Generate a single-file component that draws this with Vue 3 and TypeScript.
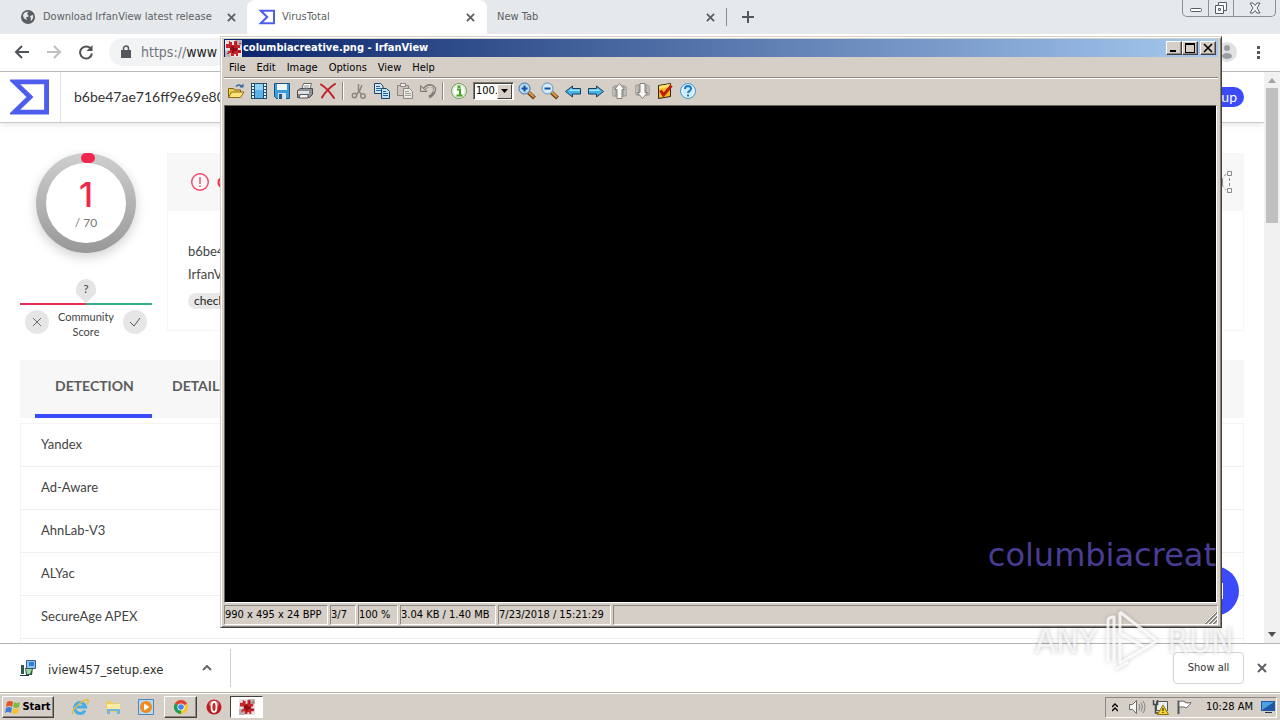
<script setup lang="ts">
import { ref } from 'vue'

interface Tool {
  id: string
  label: string
}

const hash = 'b6be47ae716ff9e69e80'
const engines: string[] = ['Yandex', 'Ad-Aware', 'AhnLab-V3', 'ALYac', 'SecureAge APEX', '']
const menus: string[] = ['File', 'Edit', 'Image', 'Options', 'View', 'Help']
const zoomLevel = ref('100.')

const toolsA: Tool[] = [
  { id: 'open', label: 'Open' },
  { id: 'film', label: 'Slideshow' },
  { id: 'save', label: 'Save' },
  { id: 'print', label: 'Print' },
  { id: 'delete', label: 'Delete' },
  { id: 'sep', label: '' },
  { id: 'cut', label: 'Cut' },
  { id: 'copy', label: 'Copy' },
  { id: 'paste', label: 'Paste' },
  { id: 'undo', label: 'Undo' },
  { id: 'sep', label: '' },
  { id: 'info', label: 'Information' },
]
const toolsB: Tool[] = [
  { id: 'zoomin', label: 'Zoom in' },
  { id: 'zoomout', label: 'Zoom out' },
  { id: 'prev', label: 'Previous file' },
  { id: 'next', label: 'Next file' },
  { id: 'pageup', label: 'Previous page' },
  { id: 'pagedown', label: 'Next page' },
  { id: 'settings', label: 'Settings' },
  { id: 'help', label: 'Help' },
]
</script>

<template>
  <div class="desktop">
    <svg class="defs" width="0" height="0" aria-hidden="true">
      <defs>
        <symbol id="i-splat" viewBox="0 0 17 17">
          <path d="M0 0H17V17H0Z" fill="#e9e1e2" />
          <path d="M10 0h7v5l-4 2zM0 11l5-1 1 7H0z" fill="#b9b3b5" />
          <path d="M1 4h3V2h3v3h2V1h3v4h3v3h-2v2h3v3h-3v3h-2v-2h-2v2H6v-3H3v-2h2V8H1z" fill="#c4242a" />
          <path d="M6 6h3v2h3v3H9v2H7v-3H5zM11 2h1v3h-1zM13 11h2v1h-2z" fill="#8d0f15" />
          <path d="M2 13h2v1H2zM14 3h2v1h-2zM4 1h1v1H4z" fill="#c4242a" />
        </symbol>
        <symbol id="i-open" viewBox="0 0 18 18">
          <path d="M1.500 15.500V6.500h5l1 1.500h6v2" fill="#f2cf4a" stroke="#7b6210" />
          <path d="M1.500 15.500L4.500 10h12.500l-3.500 5.500z" fill="#ffe27a" stroke="#8e6d10" />
          <path d="M9 4.500q3-3 5.500 0" fill="none" stroke="#2f62a8" stroke-width="1.500" />
          <path d="M12.500 5.500h4V1.500z" fill="#2f62a8" />
        </symbol>
        <symbol id="i-film" viewBox="0 0 18 18">
          <path d="M1 1h16v16H1z" fill="#24506f" />
          <path d="M5 2h8v14H5z" fill="#58b4e6" /><path d="M5 2h8v6H5z" fill="#8fd2f5" />
          <path d="M3 2v14M15 2v14" stroke="#e6f4fc" stroke-width="2" stroke-dasharray="2 1" />
        </symbol>
        <symbol id="i-save" viewBox="0 0 18 18">
          <path d="M1.500 1.500h15v15h-13l-2-2z" fill="#3b9bdc" stroke="#1b5584" />
          <path d="M4 2h10v6H4z" fill="#eef7fd" /><path d="M5 11h8v6H5z" fill="#d3e2ec" /><path d="M6 12h3v5H6z" fill="#24587f" />
        </symbol>
        <symbol id="i-print" viewBox="0 0 18 18">
          <path d="M5.500 8l2-6.500h8L13.500 8z" fill="#fff" stroke="#666" />
          <path d="M1.500 8.500l3-2h12v6l-3 3h-12z" fill="#8f9294" stroke="#4a4a4a" />
          <path d="M2 9h11v3H2z" fill="#dfe1e2" /><path d="M4 12.500h8v3.500H3z" fill="#f6f6f6" stroke="#555" /><path d="M8 4h5M7.500 6h5" stroke="#8a8a8a" />
        </symbol>
        <symbol id="i-delete" viewBox="0 0 18 18">
          <path d="M2 2.500Q9 7 15 16M16 2Q8 7 3 15.500" fill="none" stroke="#c3202a" stroke-width="2" stroke-linecap="round" />
        </symbol>
        <symbol id="i-cut" viewBox="0 0 18 18">
          <path d="M8.500 2v7l3.500 4M12 3L9.500 9 6 13" fill="none" stroke="#8a8782" stroke-width="1.500" />
          <circle cx="4.500" cy="13.500" r="2.200" fill="none" stroke="#8a8782" stroke-width="1.500" /><circle cx="13" cy="14" r="2.200" fill="none" stroke="#8a8782" stroke-width="1.500" />
        </symbol>
        <symbol id="i-copy" viewBox="0 0 18 18">
          <path d="M1.500 1.500h6l2.500 2.500v7.500H1.500z" fill="#d4e8f7" stroke="#1d4468" />
          <path d="M3 4.500h4M3 6.500h5M3 8.500h5" stroke="#28639a" />
          <path d="M8.500 6.500h5l3 3v7h-8z" fill="#c4e0f5" stroke="#1d4468" />
          <path d="M10 9.500h3M10 11.500h5M10 13.500h5" stroke="#28639a" />
        </symbol>
        <symbol id="i-paste" viewBox="0 0 18 18">
          <path d="M1.500 3.500h11v10h-11z" fill="#c9c5be" stroke="#8a8782" /><path d="M4.500 1.500h5v3h-5z" fill="#eee" stroke="#8a8782" />
          <path d="M7.500 6.500h6l3 3v7h-9z" fill="#eceae6" stroke="#8a8782" /><path d="M9 9.500h4M9 11.500h6M9 13.500h6" stroke="#a19e99" />
        </symbol>
        <symbol id="i-undo" viewBox="0 0 18 18">
          <path d="M5 7Q9 2 13 4t2 6q-1 3-5 5" fill="none" stroke="#817e79" stroke-width="3" />
          <path d="M5 7Q9 3 13 4.500t1.500 5.500" fill="none" stroke="#dedbd5" />
          <path d="M1.500 3.500v6h6.500z" fill="#c7c4be" stroke="#7a7772" />
        </symbol>
        <symbol id="i-info" viewBox="0 0 18 18">
          <circle cx="9" cy="9" r="7.500" fill="#fafdf7" stroke="#6d9b55" />
          <circle cx="9" cy="9" r="6" fill="none" stroke="#d6e7cc" />
          <path d="M7 7.500h3V13M6.500 13.500h6" fill="none" stroke="#4aa322" stroke-width="2" /><path d="M7.500 3.500h3v2.500h-3z" fill="#4aa322" />
        </symbol>
        <symbol id="i-zoomin" viewBox="0 0 18 18">
          <path d="M10.500 10.500l6 5.500" stroke="#6b3d14" stroke-width="4" /><path d="M10.500 10l5.500 5" stroke="#e09b45" stroke-width="2" />
          <circle cx="6.500" cy="6.500" r="5.500" fill="#b9dcf5" stroke="#3a70a5" /><path d="M3.500 6.500h6M6.500 3.500v6" stroke="#124fa0" stroke-width="2" />
        </symbol>
        <symbol id="i-zoomout" viewBox="0 0 18 18">
          <path d="M10.500 10.500l6 5.500" stroke="#6b3d14" stroke-width="4" /><path d="M10.500 10l5.500 5" stroke="#e09b45" stroke-width="2" />
          <circle cx="6.500" cy="6.500" r="5.500" fill="#d6ebf9" stroke="#5e90bc" /><path d="M3.500 6.500h6" stroke="#124fa0" stroke-width="2" />
        </symbol>
        <symbol id="i-next" viewBox="0 0 18 18">
          <path d="M1.500 6.500h8V4l7 5.500-7 5.500v-3h-8z" fill="#43b4e8" stroke="#1c3f5d" /><path d="M2 7.500h8.500V6.500l3 2.500H2z" fill="#a5e2fb" />
        </symbol>
        <symbol id="i-prev" viewBox="0 0 18 18">
          <path d="M16.500 6.500h-8V4l-7 5.500 7 5.500v-3h8z" fill="#43b4e8" stroke="#1c3f5d" /><path d="M16 7.500H7.500V6.500l-3 2.500H16z" fill="#a5e2fb" />
        </symbol>
        <symbol id="i-pageup" viewBox="0 0 18 18">
          <path d="M2 5l3-2h9l3 2v9l-3 1H4l-2-2z" fill="#aaa7a2" /><path d="M4 6v7M15 6v7" stroke="#d8d5d0" />
          <path d="M9.500 1.500l5 6h-2.500v9H7v-9H4.500z" fill="#f8f8f8" stroke="#85827d" />
        </symbol>
        <symbol id="i-pagedown" viewBox="0 0 18 18">
          <path d="M2 3l3-1h9l3 2v9l-3 1H4l-2-2z" fill="#aaa7a2" /><path d="M4 4v7M15 4v7" stroke="#d8d5d0" />
          <path d="M9.500 16.500l5-6h-2.500v-9H7v9H4.500z" fill="#f8f8f8" stroke="#85827d" />
        </symbol>
        <symbol id="i-settings" viewBox="0 0 18 18">
          <path d="M2.500 3.500l12-2v13l-12 2z" fill="#f7b91e" stroke="#2d2413" /><path d="M3 4l11-2v3L3 7z" fill="#ffe16c" />
          <path d="M4.500 8.500L7.500 13 15.500 3.500" fill="none" stroke="#c01d12" stroke-width="3" />
        </symbol>
        <symbol id="i-help" viewBox="0 0 18 18">
          <circle cx="9" cy="9" r="7.500" fill="#cdeafb" stroke="#4897c9" /><circle cx="9" cy="9" r="6" fill="none" stroke="#f1faff" />
          <path d="M6 7q0-3 3-3t3 2.500q0 1.500-1.500 2.500T9 11" fill="none" stroke="#1378bd" stroke-width="2" /><path d="M8 12.500h2v2H8z" fill="#1378bd" />
        </symbol>
        <symbol id="i-sigma" viewBox="0 0 40 36">
          <path d="M4.500 2.500H37.500V33.500H4.500L20.500 18z" fill="none" stroke="#4d5dec" stroke-width="5" />
        </symbol>
        <symbol id="i-x" viewBox="0 0 10 10"><path d="M1 1l8 8M9 1L1 9" stroke="currentColor" stroke-width="2" /></symbol>
      </defs>
    </svg>

    <div class="browser">
      <div class="tabstrip">
        <div class="tab">
          <svg class="fav" viewBox="0 0 16 16"><circle cx="8" cy="8" r="7" fill="#5a5e62" /><path d="M3 6q2-4 6-3-3 1-1 3t-2 2l1 3q-4-1-4-5zM10 7l3-1q1 3-2 6-1-1 0-2z" fill="#e5e9ec" /></svg>
          <span class="tab-title">Download IrfanView latest release</span>
          <button class="tab-close" aria-label="Close tab"><svg width="9" height="9"><use href="#i-x" /></svg></button>
        </div>
        <div class="tab active">
          <svg class="fav"><use href="#i-sigma" /></svg>
          <span class="tab-title">VirusTotal</span>
          <button class="tab-close" aria-label="Close tab"><svg width="9" height="9"><use href="#i-x" /></svg></button>
        </div>
        <div class="tab plain">
          <span class="tab-title">New Tab</span>
          <button class="tab-close" aria-label="Close tab"><svg width="9" height="9"><use href="#i-x" /></svg></button>
        </div>
        <button class="new-tab" aria-label="New tab"><svg width="12" height="12" viewBox="0 0 12 12"><path d="M6 0v12M0 6h12" stroke="#54585c" stroke-width="2" /></svg></button>
        <div class="win-ctl">
          <button aria-label="Minimize"><svg width="14" height="14" viewBox="0 0 14 14"><rect x="1.500" y="7.500" width="11" height="3" rx="1" fill="#fff" stroke="#555c66" /></svg></button>
          <button aria-label="Restore"><svg width="14" height="14" viewBox="0 0 14 14"><path d="M4.500 1.500h8v8h-8z" fill="#fff" stroke="#555c66" /><path d="M1.500 4.500h8v8h-8z" fill="#fff" stroke="#555c66" /><path d="M4.500 7.500h2v2h-2z" fill="none" stroke="#555c66" /></svg></button>
          <button aria-label="Close"><svg width="14" height="14" viewBox="0 0 14 14"><path d="M2 2h3l2 2.500L9 2h3L9 7l3 5H9L7 9.500 5 12H2l3-5z" fill="#fff" stroke="#555c66" /></svg></button>
        </div>
      </div>

      <div class="navbar">
        <button class="nav-btn" aria-label="Back"><svg width="16" height="16" viewBox="0 0 16 16"><path d="M15 8H2M8 2L2 8l6 6" fill="none" stroke="#505357" stroke-width="2" /></svg></button>
        <button class="nav-btn" aria-label="Forward"><svg width="16" height="16" viewBox="0 0 16 16"><path d="M1 8h13M8 2l6 6-6 6" fill="none" stroke="#bdbfc1" stroke-width="2" /></svg></button>
        <button class="nav-btn" aria-label="Reload"><svg width="16" height="16" viewBox="0 0 16 16"><path d="M13 5A6 6 0 1 0 14 9.500" fill="none" stroke="#505357" stroke-width="2" /><path d="M14.500 1v6h-6z" fill="#505357" /></svg></button>
        <div class="omnibox">
          <svg width="10" height="13" viewBox="0 0 10 13"><path d="M0 5h10v8H0z" fill="#54585c" /><path d="M2.500 5V3.500a2.500 2.500 0 0 1 5 0V5" fill="none" stroke="#54585c" stroke-width="1.500" /></svg>
          <span class="url"><span class="scheme">https://</span>www</span>
        </div>
        <svg class="avatar" width="20" height="20" viewBox="0 0 20 20"><circle cx="10" cy="10" r="10" fill="#dfe1e3" /><circle cx="10" cy="6" r="3" fill="#9a9da1" /><ellipse cx="10" cy="14" rx="5" ry="3" fill="#9a9da1" /></svg>
        <button class="kebab" aria-label="Browser menu"><svg width="4" height="14" viewBox="0 0 4 14"><path d="M0 1h3v3H0zM0 6h3v3H0zM0 11h3v3H0z" fill="#54585c" /></svg></button>
      </div>

      <div class="viewport">
        <div class="page">
          <header class="vt-head">
            <a class="vt-logo" href="#" aria-label="Home"><svg width="39" height="36"><use href="#i-sigma" /></svg></a>
            <span class="vt-hash">{{ hash }}</span>
            <button class="signup">Sign up</button>
          </header>

          <main class="vt-main">
            <section class="summary">
              <aside class="score">
                <div class="ring">
                  <div class="ring-in"><strong>1</strong><span>/ 70</span></div>
                  <i class="ring-mark"></i>
                </div>
                <div class="pin">?</div>
                <div class="bar"></div>
                <div class="votes">
                  <button class="vote" aria-label="Malicious"><svg width="10" height="10" viewBox="0 0 10 10"><path d="M1 1l8 8M9 1L1 9" stroke="#6a6a6a" /></svg></button>
                  <span>Community Score</span>
                  <button class="vote" aria-label="Harmless"><svg width="12" height="10" viewBox="0 0 12 10"><path d="M1 5l4 4 6-8" fill="none" stroke="#555" /></svg></button>
                </div>
              </aside>
              <div class="card">
                <div class="card-head">
                  <svg width="18" height="18" viewBox="0 0 18 18"><circle cx="9" cy="9" r="8.300" fill="none" stroke="#ef4466" stroke-width="1.400" /><path d="M9 4v7M9 12.500v1.500" stroke="#ef4466" stroke-width="1.400" /></svg>
                  <b>One</b>
                  <svg class="graph" width="18" height="24" viewBox="0 0 18 24"><path d="M12.500 1.500h4v4h-4zM12.500 18.500h4v4h-4z" fill="none" stroke="#8b8b8b" /><path d="M4 9h4v6H4z" fill="#8b8b8b" /><path d="M11 4L7 9M7 15l4 5M14.500 8v8" fill="none" stroke="#8b8b8b" stroke-dasharray="3 2" /></svg>
                </div>
                <div class="card-body">
                  <p>b6be4</p>
                  <p>IrfanV</p>
                  <span class="tag">check</span>
                </div>
              </div>
            </section>

            <nav class="vt-tabs">
              <a class="on" href="#">DETECTION</a>
              <a href="#">DETAILS</a>
            </nav>

            <table class="engines">
              <tbody>
                <tr v-for="(name, i) in engines" :key="i"><td>{{ name }}</td></tr>
              </tbody>
            </table>
          </main>
          <button class="fab" aria-label="Chat"><svg width="18" height="16" viewBox="0 0 18 16"><path d="M0 0h18v16H0z" fill="#fff" /></svg></button>
        </div>
        <div class="scrollbar">
          <svg width="8" height="5" viewBox="0 0 8 5"><path d="M0 5L4 0l4 5z" fill="#a3a3a3" /></svg>
          <div class="track"><div class="thumb"></div></div>
          <svg width="8" height="5" viewBox="0 0 8 5"><path d="M0 0l4 5 4-5z" fill="#505050" /></svg>
        </div>
      </div>

      <div class="downloads">
        <svg width="16" height="18" viewBox="0 0 16 18"><path d="M6.500 1.500h9v8h-9z" fill="#8cc4f2" stroke="#3d5d8a" /><path d="M9 3h5v4H9z" fill="#2e7fd2" /><path d="M1 6h3v9H1zM5 9h8l-1 7H6z" fill="#2f5a4a" /><path d="M6 10h6l-2 5H7z" fill="#9fd6a4" /><path d="M0 16h9v1H0z" fill="#27364a" /></svg>
        <span class="dl-name">iview457_setup.exe</span>
        <button class="caret" aria-label="Download options"><svg width="10" height="6" viewBox="0 0 10 6"><path d="M1 5l4-4 4 4" fill="none" stroke="#66696c" stroke-width="2" /></svg></button>
        <i class="dl-sep"></i>
        <button class="show-all">Show all</button>
        <button class="dl-close" aria-label="Close downloads bar"><svg width="10" height="10"><use href="#i-x" /></svg></button>
      </div>
    </div>

    <div class="irfan">
      <div class="titlebar">
        <svg width="17" height="17"><use href="#i-splat" /></svg>
        <span class="caption">columbiacreative.png - IrfanView</span>
        <button class="tb" aria-label="Minimize"><svg width="12" height="10" viewBox="0 0 12 10"><path d="M2 7h6v2H2z" fill="#000" /></svg></button>
        <button class="tb" aria-label="Maximize"><svg width="12" height="10" viewBox="0 0 12 10"><path d="M1 0h10v10H1zM2 2v7h8V2z" fill="#000" fill-rule="evenodd" /></svg></button>
        <button class="tb last" aria-label="Close"><svg width="12" height="10" viewBox="0 0 12 10"><path d="M2 1l8 8M10 1L2 9" stroke="#000" stroke-width="1.600" /></svg></button>
      </div>
      <div class="menubar">
        <button v-for="m in menus" :key="m">{{ m }}</button>
      </div>
      <div class="toolbar">
        <template v-for="(t, i) in toolsA" :key="i">
          <i v-if="t.id === 'sep'" class="tsep"></i>
          <button v-else :aria-label="t.label"><svg width="18" height="18"><use :href="'#i-' + t.id" /></svg></button>
        </template>
        <div class="combo">
          <select v-model="zoomLevel" aria-label="Zoom"><option>100.</option></select>
          <span class="drop"><svg width="7" height="4" viewBox="0 0 7 4"><path d="M0 0h7L3.500 4z" fill="#000" /></svg></span>
        </div>
        <button v-for="t in toolsB" :key="t.id" :aria-label="t.label"><svg width="18" height="18"><use :href="'#i-' + t.id" /></svg></button>
      </div>
      <div class="canvas"><span>columbiacreat</span></div>
      <div class="status">
        <span class="c1">990 x 495 x 24 BPP</span>
        <span class="c2">3/7</span>
        <span class="c3">100 %</span>
        <span class="c4">3.04 KB / 1.40 MB</span>
        <span class="c5">7/23/2018 / 15:21:29</span>
        <span class="c6"><svg width="12" height="12" viewBox="0 0 12 12"><path d="M0 12L12 0M4 12l8-8M8 12l4-4" stroke="#807c76" stroke-width="2" /><path d="M-1 12L12-1M3 12l9-9M7 12l5-5" stroke="#fff" /></svg></span>
      </div>
    </div>

    <div class="taskbar">
      <button class="start">
        <svg width="16" height="16" viewBox="0 0 16 16"><path d="M2 3q3-2 6 0L7 8Q4 6 1 8z" fill="#e2562a" /><path d="M9 3q3 2 6 0l-1 5q-3 2-6 0z" fill="#7fba42" /><path d="M1 9q3-2 6 0l-1 5q-3-2-6 0z" fill="#3f7fd8" /><path d="M8 9q3 2 6 0l-1 5q-3 2-6 0z" fill="#f6c32c" /></svg>
        Start
      </button>
      <button class="task ie" aria-label="Internet Explorer"><svg width="18" height="18" viewBox="0 0 18 18"><path d="M14 12.500A5.500 5.500 0 1 1 14.500 9H4" fill="none" stroke="#45aee8" stroke-width="3" /><path d="M2 16Q0 13 7 7T17 2q1 1-1 4" fill="none" stroke="#e9bb3c" stroke-width="1.500" /></svg></button>
      <button class="task" aria-label="Explorer"><svg width="18" height="18" viewBox="0 0 18 18"><path d="M2 3h5l1 2h7v9H2z" fill="#eccc62" /><path d="M3 6h13v5H3z" fill="#faeaa2" /><path d="M3 16v-5h13v5h-3v-3H6v3z" fill="#6db7e0" /></svg></button>
      <button class="task" aria-label="Media Player"><svg width="18" height="18" viewBox="0 0 18 18"><path d="M1.500 1.500h15v15h-15z" fill="#b8d9f2" stroke="#4b87ba" /><circle cx="9" cy="9" r="6" fill="#f08a1c" /><path d="M7 5.500v7L12.500 9z" fill="#fff" /></svg></button>
      <button class="task raised" aria-label="Chrome"><svg width="16" height="16" viewBox="0 0 16 16"><circle cx="8" cy="8" r="7" fill="#f5c52c" /><path d="M8 8L1.900 4.500A7 7 0 0 1 14.100 4.500z" fill="#dc4437" /><path d="M8 8L1.900 4.500A7 7 0 0 0 8 15z" fill="#1c9e58" /><circle cx="8" cy="8" r="3.600" fill="#fff" /><circle cx="8" cy="8" r="2.800" fill="#4384f0" /></svg></button>
      <button class="task" aria-label="Opera"><svg width="16" height="16" viewBox="0 0 16 16"><circle cx="8" cy="8" r="7.500" fill="#bf1a20" /><ellipse cx="8" cy="5" rx="5" ry="3.500" fill="#e06a6c" /><ellipse cx="8" cy="8" rx="2.500" ry="5" fill="#c9282d" stroke="#fff" stroke-width="1.800" /></svg></button>
      <button class="task pressed" aria-label="IrfanView"><svg width="16" height="16"><use href="#i-splat" /></svg></button>
      <div class="tray">
        <svg class="t-chev" width="6" height="9" viewBox="0 0 6 9"><path d="M0 4l3-3 3 3M0 8l3-3 3 3" fill="none" stroke="#000" stroke-width="1.400" /></svg>
        <svg class="t-spk" width="18" height="16" viewBox="0 0 18 16"><path d="M1.500 5.500h3l4-4v13l-4-4h-3z" fill="#f6f6f6" stroke="#6a6a6a" /><path d="M11 5q2 3 0 6M13 3.500q3 4.500 0 9M15 2q4 6 0 12" fill="none" stroke="#858585" /></svg>
        <svg class="t-net" width="17" height="16" viewBox="0 0 17 16"><path d="M4.500 2.500h11v9h-11z" fill="#e8eef2" stroke="#555" /><path d="M1.500 1v4.500h4V1M3.500 5.500V14h4" fill="none" stroke="#4a4a4a" stroke-width="1.500" /><path d="M11 6l5.500 9.500h-11z" fill="#f7d22d" stroke="#8d7413" /><path d="M11 9v3M11 13v1" stroke="#000" /></svg>
        <svg class="t-flag" width="17" height="16" viewBox="0 0 17 16"><path d="M2.500 15V1.500" stroke="#555" stroke-width="2" /><path d="M3 2.500q3-1 6 0v1q3 1 6 0l-1.500 2.500L10 9l-2-1H3z" fill="#fbfbfb" stroke="#6b6b6b" /></svg>
        <time>10:28 AM</time>
        <svg width="16" height="14" viewBox="0 0 16 14"><path d="M1 1h14v10H1z" fill="#1c58a5" /><path d="M2 2h12L2 10z" fill="#4fa0e2" /><path d="M5 12h7v1H5z" fill="#234" /></svg>
      </div>
    </div>

    <div class="watermark" aria-hidden="true">
      <span>ANY</span>
      <svg width="56" height="64" viewBox="0 0 56 64"><path d="M16 3V24L40 38M16 3L53 32 16 54V34M4 53V12q0-4 6-4V52M12 60l12-7" fill="none" stroke="#fff" stroke-width="3" stroke-opacity=".8" stroke-linejoin="round" /></svg>
      <span>RUN</span>
    </div>
  </div>
</template>

<style>
body {
  overflow: hidden;
}
</style>

<style scoped>
* {
  box-sizing: border-box;
}
button {
  border: 0;
  padding: 0;
  margin: 0;
  background: none;
  color: inherit;
  font: inherit;
  display: inline-flex;
  align-items: center;
  justify-content: center;
  flex: none;
}
svg {
  display: block;
  flex: none;
}
a {
  color: inherit;
  text-decoration: none;
}
.defs {
  position: absolute;
}
.desktop {
  position: relative;
  height: 100vh;
  display: flex;
  flex-direction: column;
  overflow: hidden;
  font: 11px/14px "DejaVu Sans Condensed", "DejaVu Sans", sans-serif;
  color: #000;
}
.browser {
  flex: 1;
  min-height: 0;
  display: flex;
  flex-direction: column;
  background: #fff;
}

/* browser chrome */
.tabstrip {
  height: 34px;
  display: flex;
  align-items: stretch;
  background: #e5e9ec;
  color: #5b5f64;
  flex: none;
}
.tab {
  width: 239px;
  display: flex;
  align-items: center;
  gap: 7px;
  padding: 0 11px 0 12px;
}
.tab:first-child {
  width: 247px;
  padding: 0 10px 0 20px;
}
.tab.plain {
  padding: 0 10px;
}
.tab.active {
  width: 240px;
  background: #fff;
  border-radius: 8px 8px 0 0;
}
.fav {
  width: 16px;
  height: 16px;
}
.tab-title {
  flex: 1;
  white-space: nowrap;
}
.tab-close {
  width: 12px;
  height: 14px;
}
.new-tab {
  width: 43px;
  border-left: 1px solid #888c90;
  height: 18px;
  align-self: center;
}
.win-ctl {
  margin-left: auto;
  margin-right: 4px;
  display: flex;
  height: 17px;
  border: 1px solid #8a9097;
  border-top: 0;
  border-radius: 0 0 5px 5px;
}
.win-ctl button {
  width: 25px;
}
.win-ctl button + button {
  border-left: 1px solid #8a9097;
}
.win-ctl button:last-child {
  width: 42px;
}
.navbar {
  height: 38px;
  display: flex;
  align-items: center;
  padding: 0 19px 2px 6px;
  border-bottom: 1px solid #b7b9bb;
  flex: none;
}
.nav-btn {
  width: 32px;
}
.omnibox {
  flex: 1;
  margin: 0 8px 0 7px;
  height: 28px;
  border-radius: 14px;
  background: #f1f3f4;
  display: flex;
  align-items: center;
  gap: 10px;
  padding: 0 12px;
}
.url {
  font-size: 14px;
  color: #222;
}
.scheme {
  color: #72767a;
}
.avatar {
  margin-right: 20px;
}

/* page */
.viewport {
  flex: 1;
  min-height: 0;
  display: flex;
}
.page {
  flex: 1;
  position: relative;
  overflow: hidden;
  font-family: Lato, "Open Sans", sans-serif;
  color: #444;
}
.vt-head {
  height: 51px;
  display: flex;
  align-items: center;
  border-bottom: 1px solid #c8c8c8;
  box-shadow: 0 2px 6px #0000001a;
  padding-right: 20px;
}
.vt-logo {
  width: 61px;
  height: 50px;
  padding-left: 10px;
  display: flex;
  align-items: center;
  border-right: 1px solid #e2e2e2;
}
.vt-hash {
  padding-left: 13px;
  font-size: 14px;
  color: #333;
}
.signup {
  margin-left: auto;
  height: 20px;
  padding: 0 7px 0 12px;
  border-radius: 10px;
  background: #3b4bfa;
  color: #fff;
  font-size: 14px;
}
.vt-main {
  padding: 30px 20px 0;
}
.summary {
  display: flex;
  gap: 15px;
  height: 187px;
  align-items: flex-start;
}
.score {
  width: 132px;
  display: flex;
  flex-direction: column;
  align-items: center;
}
.ring {
  position: relative;
  width: 100px;
  height: 100px;
  padding: 10px;
  border-radius: 50%;
  background: linear-gradient(#cfcfcf, #989898);
  box-shadow: 0 4px 12px #0000002e;
}
.ring-in {
  height: 80px;
  border-radius: 50%;
  background: #fff;
  display: flex;
  flex-direction: column;
  align-items: center;
  padding-top: 12px;
}
.ring-in strong {
  font: 500 34px/40px Inter, sans-serif;
  color: #f0264c;
}
.ring-in span {
  font-size: 12px;
  line-height: 16px;
  color: #777;
}
.ring-mark {
  position: absolute;
  left: 45px;
  top: 0;
  width: 14px;
  height: 10px;
  border-radius: 5px;
  background: #f0264c;
}
.pin {
  width: 20px;
  height: 24px;
  margin-top: 26px;
  border-radius: 10px;
  background: #e4e4e4;
  clip-path: polygon(0 0, 100% 0, 100% 60%, 50% 100%, 0 60%);
  text-align: center;
  line-height: 20px;
  font-size: 12px;
}
.bar {
  width: 132px;
  height: 2px;
  background: linear-gradient(90deg, #e92c52 50%, #35ad87 50%);
}
.votes {
  width: 132px;
  display: flex;
  justify-content: space-between;
  padding: 5px 5px 0;
  text-align: center;
  font-size: 11px;
  line-height: 15px;
}
.votes span {
  width: 60px;
  height: 26px;
  margin-top: -1px;
}
.vote {
  width: 24px;
  height: 24px;
  border-radius: 50%;
  background: #e6e6e6;
}
.card {
  flex: 1;
  height: 178px;
  border: 1px solid #f6f6f6;
}
.card-head {
  height: 57px;
  background: #f7f7f7;
  display: flex;
  align-items: center;
  padding: 0 10px 2px 23px;
  gap: 8px;
  color: #ef3458;
  font-size: 15px;
}
.graph {
  margin-left: auto;
}
.card-body {
  padding: 29px 20px 0;
  font-size: 13px;
  line-height: 23px;
}
.card-body p {
  margin: 0;
}
.tag {
  display: inline-block;
  margin-top: 7px;
  padding: 0 6px;
  border-radius: 8px;
  line-height: 16px;
  font-size: 12px;
  background: #e8e8e8;
  color: #222;
}
.vt-tabs {
  margin-top: 20px;
  height: 58px;
  padding-left: 15px;
  background: #f7f7f7;
  display: flex;
  font-size: 14px;
  line-height: 52px;
  color: #5c5c5c;
  font-weight: 700;
}
.vt-tabs a {
  width: 117px;
  padding-left: 20px;
}
.vt-tabs a.on {
  border-bottom: 4px solid #3b4bfa;
}
.engines {
  width: 100%;
  margin-top: 5px;
  border-collapse: collapse;
  border: 1px solid #f3f3f3;
  font-size: 13px;
}
.engines td {
  height: 43px;
  padding: 0 20px 2px;
  border-bottom: 1px solid #f0f0f0;
}
.fab {
  position: absolute;
  right: 25px;
  bottom: 27px;
  width: 50px;
  height: 50px;
  border-radius: 50%;
  background: #3b4bfa;
}
.scrollbar {
  width: 16px;
  background: #f1f1f1;
  display: flex;
  flex-direction: column;
  align-items: center;
  padding: 6px 0;
}
.track {
  flex: 1;
  width: 12px;
  margin: 5px 0;
}
.thumb {
  height: 25%;
  background: #c1c1c1;
}

/* downloads */
.downloads {
  height: 49px;
  flex: none;
  border-top: 1px solid #b4b4b4;
  display: flex;
  align-items: center;
  padding: 0 12px 0 20px;
  color: #333;
}
.dl-name {
  width: 144px;
  margin-left: 12px;
  padding-top: 3px;
  font-size: 13px;
}
.caret {
  width: 30px;
  height: 30px;
}
.dl-sep {
  width: 1px;
  height: 38px;
  margin-left: 8px;
  background: #cfcfcf;
}
.show-all {
  margin-left: auto;
  width: 71px;
  height: 32px;
  border: 1px solid #d4d4d4;
  border-radius: 4px;
}
.dl-close {
  width: 12px;
  margin-left: 12px;
  color: #5d6064;
}

/* image viewer window */
.irfan {
  position: absolute;
  left: 220px;
  top: 36px;
  right: 58px;
  bottom: 92px;
  padding: 2px 3px;
  background: #d5cfc7;
  border: 1px solid #d5cfc7;
  border-right-color: #45423e;
  border-bottom-color: #45423e;
  box-shadow: inset 1px 1px #fff, inset -1px -1px #858079;
  display: flex;
  flex-direction: column;
}
.titlebar {
  height: 18px;
  display: flex;
  align-items: center;
  padding: 0 2px 0 1px;
  background: linear-gradient(90deg, #0a246a, #a6caf0);
  color: #fff;
  font-weight: 700;
  flex: none;
}
.caption {
  flex: 1;
  padding-left: 1px;
}
.tb {
  width: 16px;
  height: 14px;
  background: #d5cfc7;
  border: 1px solid;
  border-color: #fff #45423e #45423e #fff;
  box-shadow: inset -1px -1px #8d8881;
}
.tb.last {
  margin-left: 2px;
}
.menubar {
  height: 21px;
  display: flex;
  align-items: center;
  padding: 1px 0 0 5px;
  gap: 11px;
  border-bottom: 1px solid #918b84;
  flex: none;
}
.toolbar {
  height: 27px;
  display: flex;
  align-items: center;
  padding-bottom: 3px;
  border-top: 1px solid #fff;
  flex: none;
}
.toolbar button {
  width: 23px;
}
.tsep {
  width: 2px;
  height: 18px;
  margin: 0 3px;
  border-left: 1px solid #8d8881;
  border-right: 1px solid #fff;
}
.combo {
  position: relative;
  width: 41px;
  height: 18px;
  margin: 0 1px 0 3px;
  border: 1px solid;
  border-color: #7d7872 #fff #fff #7d7872;
  background: #fff;
  box-shadow: inset 1px 1px #45423e;
}
.combo select {
  width: 100%;
  height: 100%;
  padding: 0 0 0 2px;
  border: 0;
  background: none;
  appearance: none;
  font: inherit;
  color: #000;
}
.drop {
  position: absolute;
  right: 1px;
  top: 1px;
  bottom: 0;
  width: 15px;
  display: grid;
  place-items: center;
  background: #d5cfc7;
  border: 1px solid;
  border-color: #fff #45423e #45423e #fff;
  pointer-events: none;
}
.canvas {
  flex: 1;
  min-height: 0;
  background: #000;
  border: 1px solid;
  border-color: #67635e #fff #fff #67635e;
  display: flex;
  align-items: flex-end;
  justify-content: flex-end;
  overflow: hidden;
  margin-right: 1px;
}
.canvas span {
  font: 32px/40px "DejaVu Sans", sans-serif;
  color: #483d93;
  padding: 0 0 27px;
}
.status {
  height: 22px;
  padding-top: 2px;
  display: flex;
  gap: 2px;
  flex: none;
}
.status span {
  border: 1px solid;
  border-color: #8d8881 #fff #fff #8d8881;
  line-height: 17px;
  white-space: nowrap;
}
.c1 {
  width: 104px;
}
.c2 {
  width: 26px;
}
.c3 {
  width: 40px;
}
.c4 {
  width: 96px;
}
.c5 {
  width: 113px;
}
.c6 {
  flex: 1;
  display: flex;
  align-items: flex-end;
  justify-content: flex-end;
}

/* taskbar */
.taskbar {
  height: 28px;
  flex: none;
  display: flex;
  align-items: center;
  padding: 1px 3px 0 2px;
  background: #d5cfc7;
  border-top: 1px solid #b5b0a8;
  box-shadow: inset 0 1px #fff;
}
.start,
.raised {
  border: 1px solid;
  border-color: #fff #45423e #45423e #fff;
  box-shadow: inset -1px -1px #8d8881;
}
.start {
  width: 52px;
  height: 22px;
  gap: 1px;
  font-weight: 700;
}
.task {
  width: 33px;
  height: 22px;
}
.ie {
  margin-left: 9px;
}
.raised {
  margin-left: 2px;
}
.pressed {
  background: #fff;
  border: 1px solid;
  border-color: #45423e #fff #fff #45423e;
}
.tray {
  margin-left: auto;
  height: 21px;
  display: flex;
  align-items: center;
  padding: 0 0 0 6px;
  border: 1px solid;
  border-color: #8d8881 #fff #fff #8d8881;
}
.t-chev {
  margin-right: 10px;
}
.t-spk {
  margin-right: 6px;
}
.t-net {
  margin-right: 7px;
}
.t-flag {
  margin-right: 13px;
}
.tray time {
  margin-right: 7px;
}

.watermark {
  position: absolute;
  right: 46px;
  bottom: 47px;
  display: flex;
  align-items: center;
  gap: 7px;
  pointer-events: none;
  color: #ffffffb3;
  font: 34px/40px "DejaVu Sans Condensed", sans-serif;
  text-shadow: 0 0 4px #00000040;
}
.watermark svg {
  filter: drop-shadow(0 0 2px #00000040);
}
</style>
